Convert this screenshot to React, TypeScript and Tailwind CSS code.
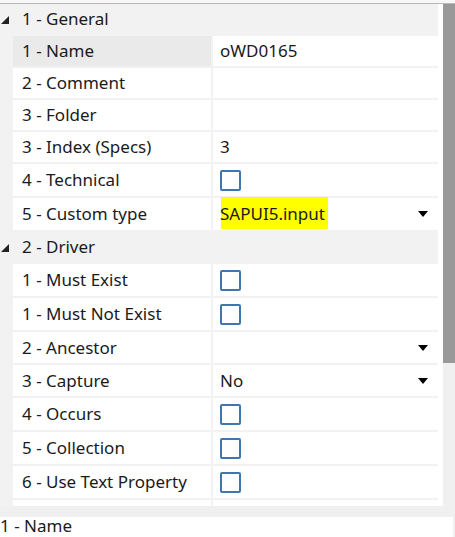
import React from "react";

type Row =
  | { kind: "cat"; label: string }
  | { kind: "text"; label: string; value?: string; selected?: boolean }
  | { kind: "check"; label: string }
  | { kind: "drop"; label: string; value?: string; highlight?: boolean; h?: number };

const rows: Row[] = [
  { kind: "cat", label: "1 - General" },
  { kind: "text", label: "1 - Name", value: "oWD0165", selected: true },
  { kind: "text", label: "2 - Comment" },
  { kind: "text", label: "3 - Folder" },
  { kind: "text", label: "3 - Index (Specs)", value: "3" },
  { kind: "check", label: "4 - Technical" },
  { kind: "drop", label: "5 - Custom type", value: "SAPUI5.input", highlight: true, h: 32 },
  { kind: "cat", label: "2 - Driver" },
  { kind: "check", label: "1 - Must Exist" },
  { kind: "check", label: "1 - Must Not Exist" },
  { kind: "drop", label: "2 - Ancestor", h: 31 },
  { kind: "drop", label: "3 - Capture", value: "No", h: 31 },
  { kind: "check", label: "4 - Occurs" },
  { kind: "check", label: "5 - Collection" },
  { kind: "check", label: "6 - Use Text Property" },
  { kind: "text", label: "" },
];

const Expander = () => (
  <svg width="8" height="8" viewBox="0 0 8 8" className="absolute left-[1px] top-[12px]">
    <polygon points="8,0 8,8 0,8" fill="#222" />
  </svg>
);

const Caret = () => (
  <svg width="10" height="6" viewBox="0 0 10 6" className="mr-[10px] shrink-0">
    <polygon points="0,0 10,0 5,6" fill="#000" />
  </svg>
);

const Check = () => (
  <div className="w-[21px] h-[21px] border-2 border-[#3f76b0] rounded-[2px] bg-white" />
);

function RowView({ r }: { r: Row }) {
  if (r.kind === "cat") {
    return (
      <div className="relative shrink-0 h-[30px] flex items-center pl-[22px] text-[17px] text-[#1a1a1a]">
        <Expander />
        {r.label}
      </div>
    );
  }
  const h = r.kind === "check" ? 32 : r.kind === "drop" ? r.h ?? 31 : 30;
  const selected = r.kind === "text" && r.selected;
  return (
    <div className="shrink-0 flex gap-[2px] pl-[13px]" style={{ height: h }}>
      <div
        className={
          "w-[198px] flex items-center pl-[9px] text-[17px] text-[#1a1a1a] whitespace-nowrap " +
          (selected ? "bg-[#eaeaea]" : "bg-white")
        }
      >
        {r.label}
      </div>
      <div className="flex-1 bg-white flex items-center justify-between pl-[7px] text-[17px] text-[#1a1a1a]">
        {r.kind === "text" && <span>{r.value ?? ""}</span>}
        {r.kind === "check" && <Check />}
        {r.kind === "drop" && (
          <>
            {r.highlight ? (
              <span className="relative">
                <span className="absolute left-[1px] right-[-3px] top-[-4px] bottom-[-2px] bg-[#ffff00]" />
                <span className="relative">{r.value}</span>
              </span>
            ) : (
              <span>{r.value ?? ""}</span>
            )}
            <Caret />
          </>
        )}
      </div>
    </div>
  );
}

export default function App() {
  return (
    <div
      className="w-[455px] h-[537px] bg-white overflow-hidden flex flex-col"
      style={{ fontFamily: '"Noto Sans", "Open Sans", sans-serif' }}
    >
      <div className="shrink-0 h-[3px] bg-[#f7f7f7]" />
      <div className="shrink-0 h-[1px] bg-[#b9b9b9]" />
      <div className="shrink-0 h-[502px] flex">
        <div className="w-[438px] bg-[#f2f2f2] overflow-hidden flex flex-col gap-[2px]">
          {rows.map((r, i) => (
            <RowView key={i} r={r} />
          ))}
        </div>
        <div className="w-[5px] bg-white" />
        <div className="w-[12px] flex flex-col bg-[#f0f0f0]">
          <div className="shrink-0 h-[359px] bg-[#999999]" />
        </div>
      </div>
      <div className="shrink-0 h-[11px] bg-[#f0f0f0]" />
      <div className="shrink-0 h-[20px] flex">
        <div className="flex-1 bg-white text-[17px] text-[#1a1a1a] leading-[18px] whitespace-nowrap">
          1 - Name
        </div>
        <div className="w-[2px] bg-[#f0f0f0]" />
      </div>
    </div>
  );
}
